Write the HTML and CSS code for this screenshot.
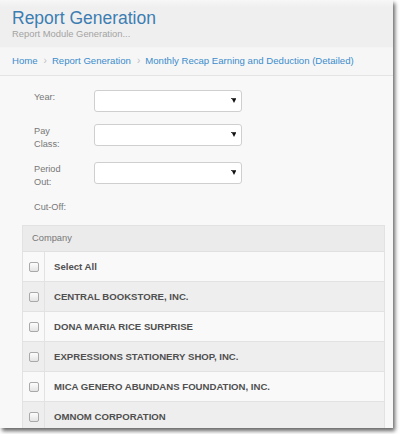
FILE: index.html
```html
<!DOCTYPE html>
<html>
<head>
<meta charset="utf-8">
<link rel="stylesheet" href="styles.css">
</head>
<body>
<div class="card">
  <header class="page-header">
    <h1 class="title">Report Generation</h1>
    <p class="subtitle">Report Module Generation...</p>
  </header>
  <nav class="crumbs">
    <a class="crumb">Home</a><span class="sep">›</span><a class="crumb">Report Generation</a><span class="sep">›</span><a class="crumb">Monthly Recap Earning and Deduction (Detailed)</a>
  </nav>
  <section class="form">
    <div class="form-row first">
      <label class="label">Year:</label>
      <div class="select"></div>
    </div>
    <div class="form-row">
      <label class="label">Pay Class:</label>
      <div class="select"></div>
    </div>
    <div class="form-row">
      <label class="label">Period Out:</label>
      <div class="select"></div>
    </div>
    <div class="form-row">
      <label class="label">Cut-Off:</label>
    </div>
  </section>
  <div class="table">
    <div class="thead">Company</div>
    <div class="row light"><div class="check-cell"><span class="checkbox"></span></div><div class="name">Select All</div></div>
    <div class="row dark"><div class="check-cell"><span class="checkbox"></span></div><div class="name">CENTRAL BOOKSTORE, INC.</div></div>
    <div class="row light"><div class="check-cell"><span class="checkbox"></span></div><div class="name">DONA MARIA RICE SURPRISE</div></div>
    <div class="row dark"><div class="check-cell"><span class="checkbox"></span></div><div class="name">EXPRESSIONS STATIONERY SHOP, INC.</div></div>
    <div class="row light"><div class="check-cell"><span class="checkbox"></span></div><div class="name">MICA GENERO ABUNDANS FOUNDATION, INC.</div></div>
    <div class="row dark"><div class="check-cell"><span class="checkbox"></span></div><div class="name">OMNOM CORPORATION</div></div>
  </div>
</div>
</body>
</html>
```
FILE: styles.css
```css
html, body {
  margin: 0;
  padding: 0;
  background: #ffffff;
}
body {
  width: 400px;
  height: 434px;
  overflow: hidden;
  font-family: "Liberation Sans", Arial, sans-serif;
}
.card {
  width: 393px;
  height: 428px;
  overflow: hidden;
  background: #f8f8f8;
  box-shadow: 2px 3px 4px rgba(0, 0, 0, 0.6);
}
.page-header {
  height: 39px;
  padding: 8px 12px 0;
  background: linear-gradient(#f7f7f7, #efefef 15%, #efefef);
  border-bottom: 1px solid #f4f4f4;
}
.title {
  margin: 0;
  font-size: 17.5px;
  line-height: 20px;
  font-weight: normal;
  color: #3c7db2;
}
.subtitle {
  margin: 0;
  font-size: 9.4px;
  line-height: 12px;
  color: #a3a3a3;
}
.crumbs {
  height: 12px;
  padding: 7px 12px 8px;
  background: #f6f6f6;
  border-bottom: 1px solid #e4e4e4;
  font-size: 9.6px;
  line-height: 12px;
  white-space: nowrap;
}
.crumb {
  color: #3b8dcc;
}
.sep {
  color: #c0c0c0;
  margin: 0 5px 0 6px;
  font-size: 10px;
}
.form {
  padding: 14px 0 0 34px;
}
.form-row {
  display: flex;
  align-items: flex-start;
  margin-bottom: 11px;
}
.form-row.first {
  min-height: 23px;
}
.label {
  width: 40px;
  margin-right: 20px;
  padding-top: 1px;
  font-size: 9.2px;
  line-height: 13px;
  color: #777777;
}
.select {
  position: relative;
  box-sizing: border-box;
  width: 148px;
  height: 22px;
  background: #ffffff;
  border: 1px solid #cfcfcf;
  border-radius: 3px;
}
.select::after {
  content: "";
  position: absolute;
  right: 5px;
  top: 8px;
  border-left: 2.5px solid transparent;
  border-right: 2.5px solid transparent;
  border-top: 4px solid #111111;
}
.select::before {
  content: "";
  position: absolute;
  right: 5px;
  top: 7px;
  width: 5px;
  height: 1px;
  background: #444444;
}
.table {
  margin: 0 8px 0 22px;
  border: 1px solid #e2e2e2;
  border-bottom: none;
}
.thead {
  height: 25px;
  padding-left: 9px;
  background: #ebebeb;
  border-bottom: 1px solid #e0e0e0;
  font-size: 9.3px;
  line-height: 25px;
  color: #777777;
}
.row {
  display: flex;
  height: 29px;
  border-bottom: 1px solid #e2e2e2;
}
.row.light {
  background: #f9f9f9;
}
.row.dark {
  background: #eeeeee;
}
.check-cell {
  display: flex;
  align-items: center;
  justify-content: center;
  width: 21px;
  border-right: 1px solid #e2e2e2;
}
.checkbox {
  box-sizing: border-box;
  width: 10px;
  height: 10px;
  border: 1px solid #a9a9a9;
  border-radius: 2px;
  background: linear-gradient(#fdfdfd, #e4e4e4);
}
.name {
  padding-left: 9px;
  font-size: 9.6px;
  font-weight: bold;
  line-height: 29px;
  color: #505050;
  white-space: nowrap;
}
```
